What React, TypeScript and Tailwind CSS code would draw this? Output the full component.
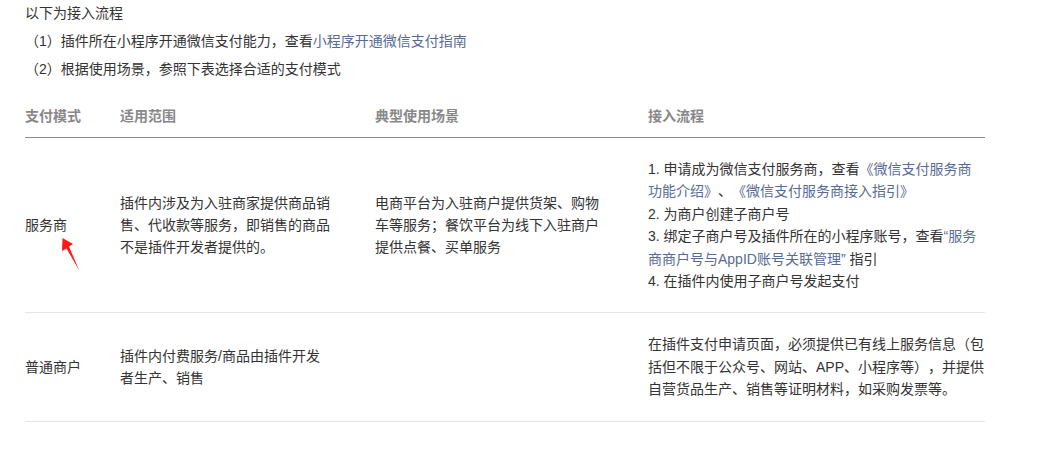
import React from "react";

const link = "text-[#576b95]";

function Cell({ children, className = "" }: { children: React.ReactNode; className?: string }) {
  return <div className={`py-[20px] leading-[22.4px] ${className}`}>{children}</div>;
}

export default function App() {
  return (
    <div
      className="relative w-[1061px] h-[453px] bg-white text-[14px] text-[#333333] overflow-hidden [text-spacing-trim:space-all]"
      style={{ fontFamily: '"Liberation Sans", "Noto Sans CJK SC", sans-serif' }}
    >
      <div className="px-[25px] w-[1010px]">
        <div className="flex flex-col gap-[2px] leading-[26px]">
          <p>以下为接入流程</p>
          <p>（1）插件所在小程序开通微信支付能力，查看<span className={link}>小程序开通微信支付指南</span></p>
          <p>（2）根据使用场景，参照下表选择合适的支付模式</p>
        </div>

        <div className="w-[960px]">
          <div className="grid grid-cols-[95px_255px_273px_337px] pt-[23px] pb-[10px] leading-[22px] font-bold text-[#888888] border-b border-[#8c8c8c]">
            <div>支付模式</div>
            <div>适用范围</div>
            <div>典型使用场景</div>
            <div>接入流程</div>
          </div>

          <div className="grid grid-cols-[95px_255px_273px_337px] items-center border-b border-[#e6e6e6]">
            <Cell>服务商</Cell>
            <Cell>
              插件内涉及为入驻商家提供商品销<br />售、代收款等服务，即销售的商品<br />不是插件开发者提供的。
            </Cell>
            <Cell>
              电商平台为入驻商户提供货架、购物<br />车等服务；餐饮平台为线下入驻商户<br />提供点餐、买单服务
            </Cell>
            <Cell className="whitespace-nowrap">
              1. 申请成为微信支付服务商，查看<span className={link}>《微信支付服务商</span>
              <br />
              <span className={link}>功能介绍》</span>、<span className={link}>《微信支付服务商接入指引》</span>
              <br />
              2. 为商户创建子商户号
              <br />
              3. 绑定子商户号及插件所在的小程序账号，查看<span className={link}>“服务</span>
              <br />
              <span className={link}>商商户号与AppID账号关联管理”</span> 指引
              <br />
              4. 在插件内使用子商户号发起支付
            </Cell>
          </div>

          <div className="grid grid-cols-[95px_255px_273px_337px] items-center border-b border-[#e6e6e6]">
            <Cell>普通商户</Cell>
            <Cell>
              插件内付费服务/商品由插件开发<br />者生产、销售
            </Cell>
            <Cell>{"\u00a0"}</Cell>
            <Cell className="whitespace-nowrap">
              在插件支付申请页面，必须提供已有线上服务信息（包<br />括但不限于公众号、网站、APP、小程序等），并提供<br />自营货品生产、销售等证明材料，如采购发票等。
            </Cell>
          </div>
        </div>
      </div>

      <svg className="absolute left-[55px] top-[230px]" width="32" height="46" viewBox="0 0 32 46">
        <polygon points="7.5,8 18,14 14,16.5 24.5,41 11.5,18.5 7,21" fill="#ff1a1a" />
      </svg>
    </div>
  );
}
